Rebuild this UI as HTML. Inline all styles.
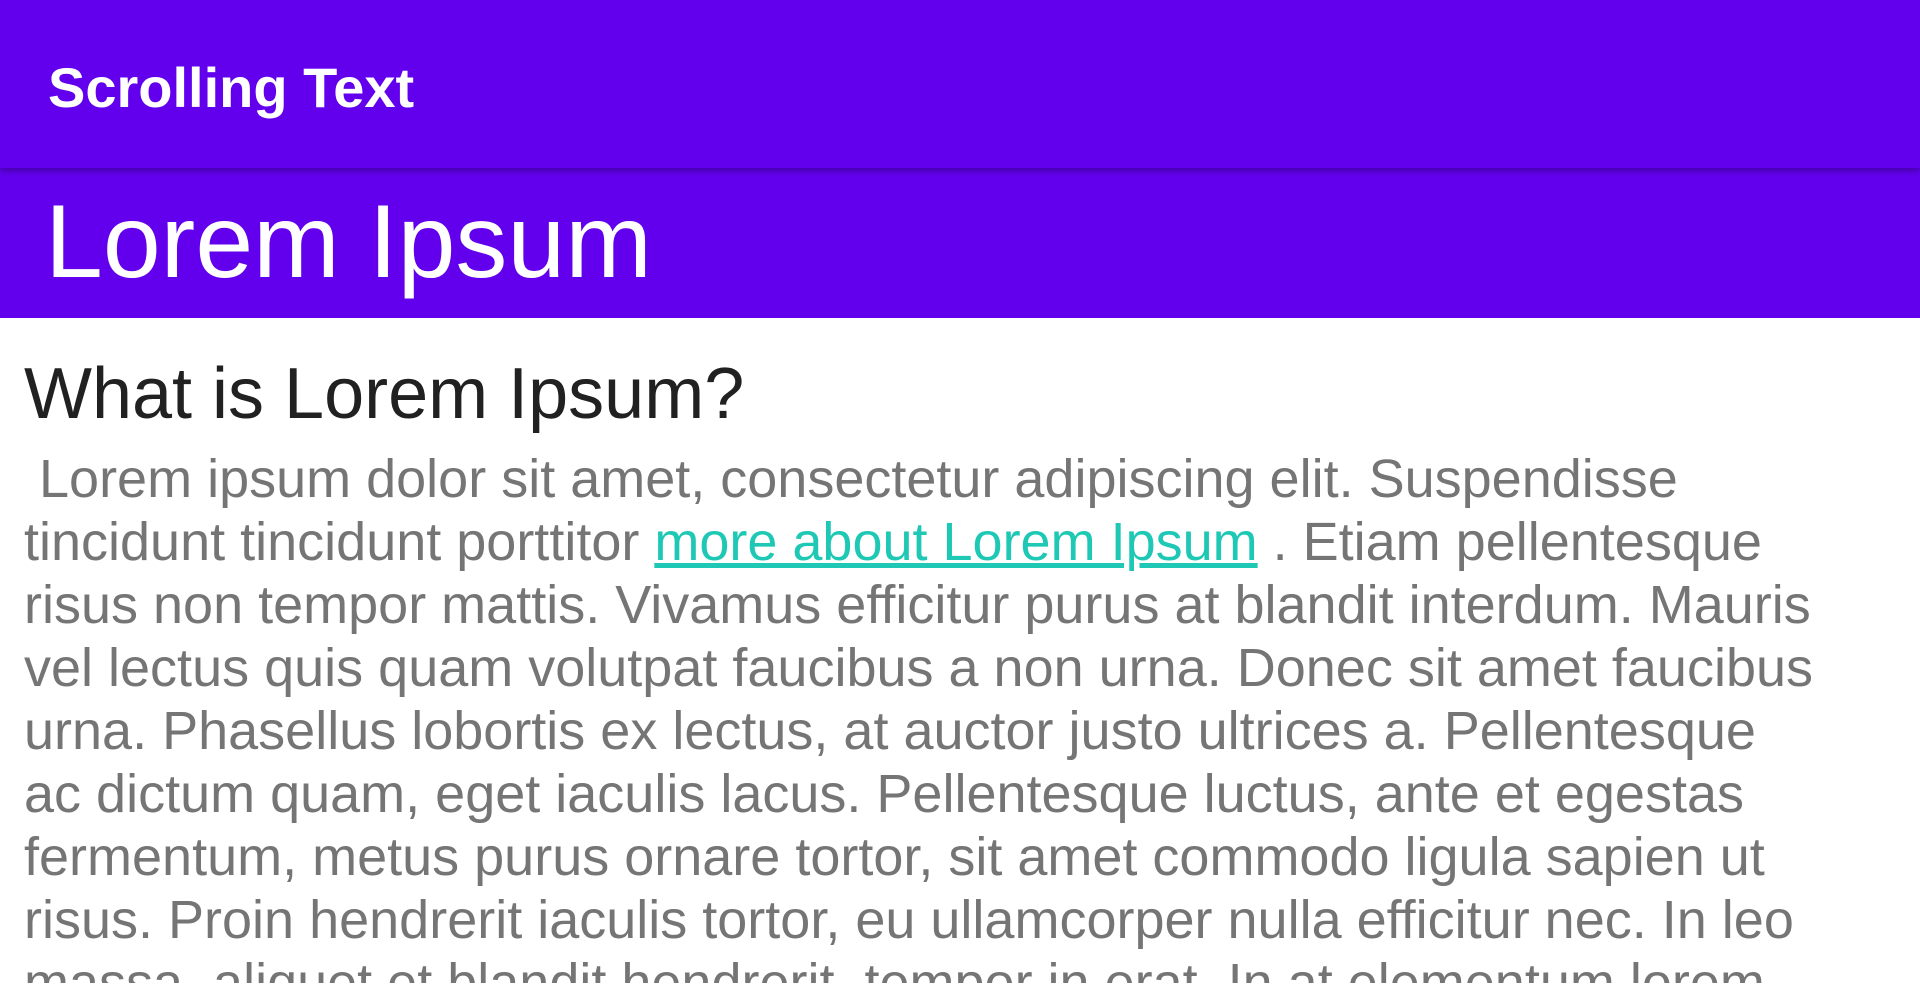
<!DOCTYPE html>
<html><head><meta charset="utf-8"><style>
body{margin:0;width:1920px;height:1008px;overflow:hidden;background:#fff;font-family:"Liberation Sans",sans-serif;}
.bar{position:absolute;left:0;top:0;width:1920px;height:168px;background:#6200EE;z-index:2;box-shadow:0 3px 6px rgba(0,0,0,0.3);}
.bar span{position:absolute;left:48px;top:56px;font-size:56px;font-weight:bold;color:#fff;line-height:64px;}
.band{position:absolute;left:0;top:168px;width:1920px;height:150px;background:#6200EE;}
.band span{position:absolute;left:45px;top:12px;font-size:104px;color:#fff;line-height:124px;}
h1{position:absolute;left:24px;top:351px;margin:0;font-weight:normal;font-size:72px;line-height:86px;color:#212121;}
.body{position:absolute;left:24px;top:448px;width:1880px;height:535px;overflow:hidden;color:#757575;font-size:54px;line-height:63px;}
.body div{white-space:nowrap;}
a{color:#1ec8b4;text-decoration:underline;}
</style></head><body>
<div class="bar"><span>Scrolling Text</span></div>
<div class="band"><span>Lorem Ipsum</span></div>
<h1>What is Lorem Ipsum?</h1>
<div class="body">
<div>&nbsp;Lorem ipsum dolor sit amet, consectetur adipiscing elit. Suspendisse</div>
<div>tincidunt tincidunt porttitor <a>more about Lorem Ipsum</a> . Etiam pellentesque</div>
<div>risus non tempor mattis. Vivamus efficitur purus at blandit interdum. Mauris</div>
<div>vel lectus quis quam volutpat faucibus a non urna. Donec sit amet faucibus</div>
<div>urna. Phasellus lobortis ex lectus, at auctor justo ultrices a. Pellentesque</div>
<div>ac dictum quam, eget iaculis lacus. Pellentesque luctus, ante et egestas</div>
<div>fermentum, metus purus ornare tortor, sit amet commodo ligula sapien ut</div>
<div>risus. Proin hendrerit iaculis tortor, eu ullamcorper nulla efficitur nec. In leo</div>
<div>massa, aliquet et blandit hendrerit, tempor in erat. In at elementum lorem</div>
</div>
</body></html>
